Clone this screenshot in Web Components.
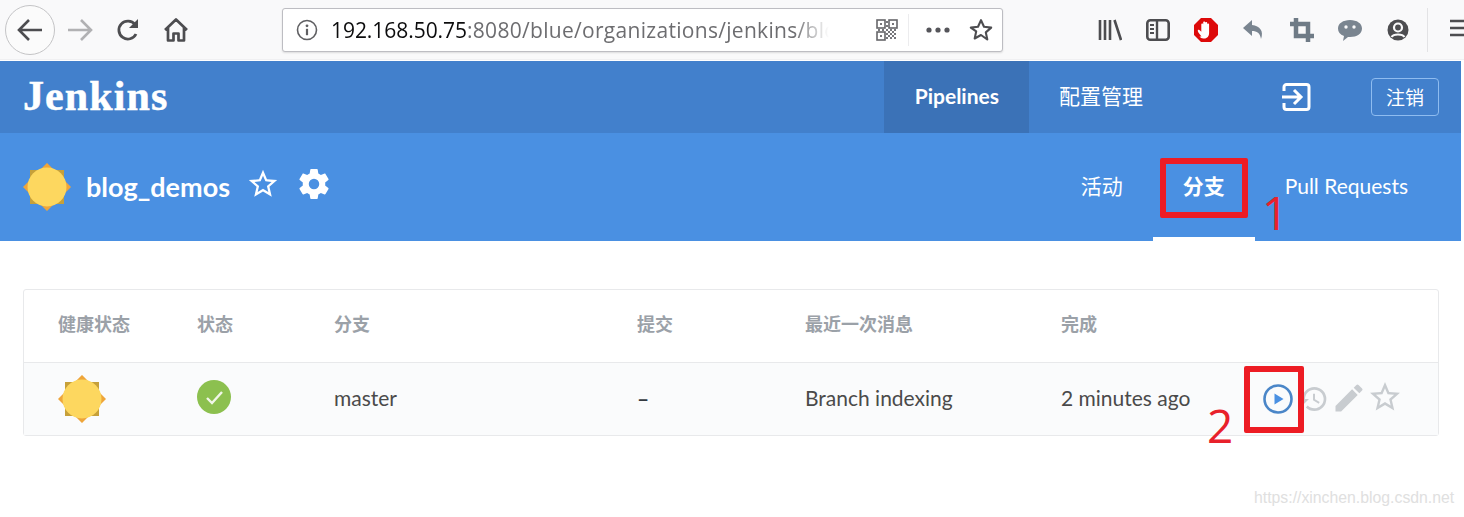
<!DOCTYPE html>
<html>
<head>
<meta charset="utf-8">
<title>Jenkins</title>
<style>
  html, body { margin: 0; padding: 0; background: #fff; overflow: hidden; }
  body { width: 1464px; height: 517px; position: relative; font-family: Lato, "Noto Sans CJK SC", sans-serif; }
  #wm { position: absolute; left: 1254px; top: 489px; font: 15.8px "Liberation Sans", sans-serif; color: #e0e0e0; }
</style>
</head>
<body>
<browser-toolbar></browser-toolbar>
<jenkins-header></jenkins-header>
<pipeline-bar name="blog_demos"></pipeline-bar>
<branch-table>
  <branch-row branch="master" commit="–" message="Branch indexing" done="2 minutes ago"></branch-row>
</branch-table>
<red-mark x="1160" y="158" w="88" h="60" label="1" lx="1262" ly="182"></red-mark>
<red-mark x="1244" y="366" w="60" h="67" label="2" lx="1207" ly="395"></red-mark>
<span id="wm">https://xinchen.blog.csdn.net</span>

<script>
const ICONS = {
  history: 'M13 3a9 9 0 0 0-9 9H1l3.89 3.89.07.14L9 12H6c0-3.87 3.13-7 7-7s7 3.13 7 7-3.13 7-7 7c-1.93 0-3.68-.79-4.94-2.06l-1.42 1.42A8.954 8.954 0 0 0 13 21a9 9 0 0 0 0-18zm-1 5v5l4.28 2.54.72-1.21-3.5-2.08V8H12z',
  pencil: 'M3 17.25V21h3.75L17.81 9.94l-3.75-3.75L3 17.25zM20.71 7.04a1 1 0 0 0 0-1.41l-2.34-2.34a1 1 0 0 0-1.41 0l-1.83 1.83 3.75 3.75 1.83-1.83z',
  star: 'M22 9.24l-7.19-.62L12 2 9.19 8.63 2 9.24l5.46 4.73L5.82 21 12 17.27 18.18 21l-1.63-7.03L22 9.24zM12 15.4l-3.76 2.27 1-4.28-3.32-2.88 4.38-.38L12 6.1l1.71 4.04 4.38.38-3.32 2.88 1 4.28L12 15.4z',
  gear: 'M19.43 12.98c.04-.32.07-.64.07-.98s-.03-.66-.07-.98l2.11-1.65c.19-.15.24-.42.12-.64l-2-3.46c-.12-.22-.39-.3-.61-.22l-2.49 1c-.52-.4-1.08-.73-1.69-.98l-.38-2.65A.488.488 0 0 0 14 2h-4c-.25 0-.46.18-.49.42l-.38 2.65c-.61.25-1.17.59-1.69.98l-2.49-1c-.23-.09-.49 0-.61.22l-2 3.46c-.13.22-.07.49.12.64l2.11 1.65c-.04.32-.07.65-.07.98s.03.66.07.98l-2.11 1.65c-.19.15-.24.42-.12.64l2 3.46c.12.22.39.3.61.22l2.49-1c.52.4 1.08.73 1.69.98l.38 2.65c.03.24.24.42.49.42h4c.25 0 .46-.18.49-.42l.38-2.65c.61-.25 1.17-.59 1.69-.98l2.49 1c.23.09.49 0 .61-.22l2-3.46c.12-.22.07-.49-.12-.64l-2.11-1.65zM12 15.5a3.5 3.5 0 1 1 0-7 3.5 3.5 0 0 1 0 7z'
};

class MdIcon extends HTMLElement {
  connectedCallback() {
    const size = this.getAttribute('size') || 24;
    const color = this.getAttribute('color') || '#fff';
    this.attachShadow({ mode: 'open' }).innerHTML = `
      <style>:host{display:block;width:${size}px;height:${size}px;line-height:0}</style>
      <svg width="${size}" height="${size}" viewBox="0 0 24 24"><path fill="${color}" fill-rule="evenodd" d="${ICONS[this.getAttribute('name')]}"/></svg>`;
  }
}
customElements.define('md-icon', MdIcon);

class WeatherSun extends HTMLElement {
  connectedCallback() {
    const size = this.getAttribute('size') || 46;
    this.attachShadow({ mode: 'open' }).innerHTML = `
      <style>:host{display:block;width:${size}px;height:${size}px;line-height:0}</style>
      <svg width="${size}" height="${size}" viewBox="0 0 48 48">
        <rect x="7" y="7" width="34" height="34" fill="#c6a03a"/>
        <rect x="7" y="7" width="34" height="34" fill="#eea53a" transform="rotate(45 24 24)"/>
        <circle cx="24" cy="24" r="19.5" fill="#fdd75f"/>
      </svg>`;
  }
}
customElements.define('weather-sun', WeatherSun);

const toolbarTpl = document.createElement('template');
toolbarTpl.innerHTML = `
  <style>
    :host { display: flex; align-items: center; height: 60px; background: #f9f9fa; box-sizing: border-box; padding-left: 5px; border-bottom: 1px solid #f0f0f2; overflow: hidden; }
    .back { width: 50px; height: 50px; border-radius: 50%; border: 1px solid #c4c4c6; background: #fbfbfb; box-sizing: border-box; display: flex; align-items: center; justify-content: center; flex: none; }
    .btn { width: 48px; height: 40px; display: flex; align-items: center; justify-content: center; flex: none; }
    .nav { display: flex; flex: none; }
    .fwd { margin-left: 1px; }
    .url { margin-left: 82px; width: 721px; height: 44px; box-sizing: border-box; background: #fff; border: 1px solid #bdbdc2; border-radius: 3px; box-shadow: 0 1px 2px rgba(0,0,0,.12); display: flex; align-items: center; padding-left: 13px; flex: none; }
    .text { margin-left: 13px; width: 498px; white-space: nowrap; font: 21px "Open Sans", sans-serif; color: #6d6d70; letter-spacing: .3px; -webkit-mask-image: linear-gradient(90deg,#000 93%,transparent); mask-image: linear-gradient(90deg,#000 93%,transparent); }
    .text b { font-weight: 400; color: #0c0c0d; letter-spacing: -.05px; }
    .qr { margin-left: 47px; }
    .sep { width: 1px; height: 32px; background: #ececee; margin-left: 10px; }
    .dots { margin-left: 17px; }
    .staru { margin-left: 19px; }
    .right { display: flex; margin-left: 83px; flex: none; }
    .vsep { width: 1px; height: 44px; background: #e3e3e5; margin-left: 5px; flex: none; }
    .ham { margin-left: 22px; flex: none; }
  </style>
  <div class="back">
    <svg width="30" height="30" viewBox="0 0 30 30"><path d="M27 15H4M14 5L4 15l10 10" fill="none" stroke="#4d4d50" stroke-width="2.6"/></svg>
  </div>
  <div class="nav">
    <div class="btn fwd"><svg width="28" height="26" viewBox="0 0 28 26"><path d="M2 13h23M15 3l10 10-10 10" fill="none" stroke="#b1b1b3" stroke-width="2.6"/></svg></div>
    <div class="btn"><svg width="26" height="26" viewBox="0 0 26 26"><path d="M21 17a9 9 0 1 1-1-9.5" fill="none" stroke="#4d4d50" stroke-width="2.8"/><path d="M23 2v9h-9z" fill="#4d4d50"/></svg></div>
    <div class="btn"><svg width="26" height="26" viewBox="0 0 26 26"><path d="M2 13L13 2.5 24 13M5 11v12.5h5.5v-7h5v7H21V11" fill="none" stroke="#4d4d50" stroke-width="2.7" stroke-linejoin="round"/></svg></div>
  </div>
  <div class="url">
    <svg width="22" height="22" viewBox="0 0 22 22"><circle cx="11" cy="11" r="9.5" fill="none" stroke="#5f5f62" stroke-width="1.6"/><circle cx="11" cy="6.8" r="1.4" fill="#5f5f62"/><path d="M11 9.8v6.4" stroke="#5f5f62" stroke-width="2.2"/></svg>
    <div class="text"><b>192.168.50.75</b>:8080/blue/organizations/jenkins/blo</div>
    <svg class="qr" width="22" height="22" viewBox="0 0 22 22">
      <g fill="none" stroke="#66666a" stroke-width="1.6"><rect x="1" y="1" width="8" height="8"/><rect x="13" y="1" width="8" height="8"/><rect x="1" y="13" width="8" height="8"/></g>
      <path d="M4 4h2v2H4zM16 4h2v2h-2zM4 16h2v2H4zM10 2h2v2h-2zM10 6h2v2h-2zM10 10h2v2h-2zM2 10h2v2H2zM6 10h2v2H6zM14 10h2v2h-2zM18 10h2v2h-2zM12 12h2v2h-2zM16 12h2v2h-2zM10 14h2v2h-2zM14 14h2v2h-2zM18 14h2v2h-2zM12 16h2v2h-2zM16 16h2v2h-2zM10 18h2v2h-2zM14 18h2v2h-2zM18 18h2v2h-2z" fill="#77777b"/>
    </svg>
    <div class="sep"></div>
    <svg class="dots" width="24" height="6" viewBox="0 0 24 6"><circle cx="3" cy="3" r="2.6" fill="#55555a"/><circle cx="12" cy="3" r="2.6" fill="#55555a"/><circle cx="21" cy="3" r="2.6" fill="#55555a"/></svg>
    <svg class="staru" width="24" height="24" viewBox="0 0 24 24"><path d="M12 2.2l3 6.6 7.2.8-5.4 4.8 1.5 7.1L12 17l-6.300 3.500 1.500-7.100L1.800 9.600 9 8.800z" fill="none" stroke="#4d4d50" stroke-width="2.100" stroke-linejoin="round"/></svg>
  </div>
  <div class="right">
    <div class="btn"><svg width="24" height="24" viewBox="0 0 24 24"><path d="M2 2v20M7 2v20M12 2v20M16.500 2L23 22" stroke="#4d4d50" stroke-width="2.600" fill="none"/></svg></div>
    <div class="btn"><svg width="24" height="22" viewBox="0 0 24 22"><rect x="1.300" y="1.300" width="21.400" height="19.400" rx="3" fill="none" stroke="#4d4d50" stroke-width="2.600"/><path d="M11 1v20" stroke="#4d4d50" stroke-width="2.400"/><path d="M4 6h4M4 10h4M4 14h4" stroke="#4d4d50" stroke-width="1.800"/></svg></div>
    <div class="btn"><svg width="26" height="26" viewBox="0 0 26 26"><path d="M8 1h10l7 7v10l-7 7H8l-7-7V8z" fill="#dd0a0a"/><path d="M8.500 19.500C7 17.500 5 15.500 4.800 14c-.2-1.300 1.200-1.500 2.200-.6l1.300 1.300V7.500c0-1.400 1.900-1.400 1.900 0v3.500V5.500c0-1.400 2-1.400 2 0V11V6c0-1.400 2-1.400 2 0v5V7.500c0-1.400 1.900-1.400 1.900 0V16c0 3-1.800 5.500-4.800 5.500h-1c-1.700 0-2.800-.7-3.800-2z" fill="#fff"/></svg></div>
    <div class="btn"><svg width="24" height="24" viewBox="0 0 24 24"><path d="M10 2L1 10l9 8v-5c5 0 8 2 9 8 3-8-1-13-9-14z" fill="#7a8590"/></svg></div>
    <div class="btn"><svg width="24" height="24" viewBox="0 0 24 24"><path d="M6 0v18h18M0 6h18v18" fill="none" stroke="#6f7b86" stroke-width="4.500"/></svg></div>
    <div class="btn"><svg width="26" height="24" viewBox="0 0 26 24"><path d="M13 2c7 0 12 3.500 12 8.500S20 19 13 19h-2l-5 4 1-5C3 16.500 1 14 1 10.500 1 5.500 6 2 13 2z" fill="#7a8590"/><circle cx="9" cy="9" r="1.700" fill="#f9f9fa"/><circle cx="17" cy="9" r="1.700" fill="#f9f9fa"/></svg></div>
    <div class="btn"><svg width="24" height="24" viewBox="0 0 24 24"><circle cx="12" cy="12" r="10.500" fill="#4d4d50"/><circle cx="12" cy="9.500" r="4" fill="none" stroke="#f9f9fa" stroke-width="2.200"/><path d="M5.500 19c2-3.500 11-3.500 13 0" fill="none" stroke="#f9f9fa" stroke-width="2"/></svg></div>
  </div>
  <div class="vsep"></div>
  <div class="ham"><svg width="16" height="20" viewBox="0 0 16 20"><path d="M0 3h16M0 10h16M0 17h16" stroke="#4d4d50" stroke-width="2.600"/></svg></div>
`;
class BrowserToolbar extends HTMLElement {
  constructor() {
    super();
    this.attachShadow({ mode: 'open' }).appendChild(toolbarTpl.content.cloneNode(true));
  }
}
customElements.define('browser-toolbar', BrowserToolbar);

const headerTpl = document.createElement('template');
headerTpl.innerHTML = `
  <style>
    :host { display: flex; align-items: stretch; width: 1461px; height: 72px; margin-top: 1px; background: #4280cc; color: #fff; font-family: Lato, "Noto Sans CJK SC", sans-serif; }
    .logo { font: 700 42px "Liberation Serif", serif; letter-spacing: 1.1px; -webkit-text-stroke: .5px #fff; padding-left: 23px; align-self: center; margin-top: -2px; }
    nav { margin-left: auto; display: flex; font-size: 21px; }
    nav a { display: flex; align-items: center; padding: 0 30px 4px; height: 72px; box-sizing: border-box; }
    nav a.on { background: #3b72b7; font-weight: 700; padding-left: 31px; }
    .exit { margin-left: 108px; align-self: center; width: 30px; height: 30px; }
    .logout { margin: 0 22px 0 60px; align-self: center; width: 68px; height: 38px; box-sizing: border-box; border: 1px solid #8ebcf0; border-radius: 4px; display: flex; align-items: center; justify-content: center; font-size: 19px; padding-bottom: 2px; }
  </style>
  <div class="logo">Jenkins</div>
  <nav><a class="on">Pipelines</a><a>配置管理</a></nav>
  <svg class="exit" viewBox="0 0 30 30"><path d="M3 9V5a2.500 2.500 0 0 1 2.500-2.500h20A2.500 2.500 0 0 1 28 5v20a2.500 2.500 0 0 1-2.500 2.500h-20A2.500 2.500 0 0 1 3 25v-4" fill="none" stroke="#fff" stroke-width="3"/><path d="M1 15h19M13 8l7 7-7 7" fill="none" stroke="#fff" stroke-width="3"/></svg>
  <div class="logout">注销</div>
`;
class JenkinsHeader extends HTMLElement {
  constructor() {
    super();
    this.attachShadow({ mode: 'open' }).appendChild(headerTpl.content.cloneNode(true));
  }
}
customElements.define('jenkins-header', JenkinsHeader);

const barTpl = document.createElement('template');
barTpl.innerHTML = `
  <style>
    :host { display: flex; align-items: center; width: 1461px; height: 108px; background: #4a90e2; color: #fff; box-sizing: border-box; padding-left: 23px; font-family: Lato, "Noto Sans CJK SC", sans-serif; }
    .name { font-size: 27px; font-weight: 700; margin-left: 15px; margin-top: -2px; }
    .star { margin-left: 16px; margin-top: -6px; }
    .gear { margin-left: 16px; margin-top: -6px; }
    .tabs { margin-left: auto; display: flex; align-self: stretch; font-size: 21px; padding-right: 23px; }
    .tab { display: flex; align-items: center; height: 108px; box-sizing: border-box; padding: 0 30px 4px; }
    .tab.on { font-weight: 700; border-bottom: 4px solid #fff; padding-bottom: 0; }
  </style>
  <weather-sun size="48"></weather-sun>
  <div class="name"></div>
  <md-icon class="star" name="star" size="34"></md-icon>
  <md-icon class="gear" name="gear" size="36"></md-icon>
  <div class="tabs">
    <div class="tab">活动</div>
    <div class="tab on">分支</div>
    <div class="tab">Pull Requests</div>
  </div>
`;
class PipelineBar extends HTMLElement {
  constructor() {
    super();
    this.attachShadow({ mode: 'open' }).appendChild(barTpl.content.cloneNode(true));
  }
  connectedCallback() {
    this.shadowRoot.querySelector('.name').textContent = this.getAttribute('name');
  }
}
customElements.define('pipeline-bar', PipelineBar);

const COLS = '139px 137px 303px 168px 256px 1fr';

const tableTpl = document.createElement('template');
tableTpl.innerHTML = `
  <style>
    :host { display: block; width: 1416px; margin: 48px 0 0 23px; box-sizing: border-box; border: 1px solid #e8e9eb; border-radius: 3px; font-family: Lato, "Noto Sans CJK SC", sans-serif; }
    .head { display: grid; grid-template-columns: ${COLS}; align-items: center; height: 72px; box-sizing: content-box; padding: 0 0 0 34px; font-size: 18px; font-weight: 700; color: #9ba1a8; border-bottom: 1px solid #e8e9eb; }
    .head div { margin-top: -7px; }
  </style>
  <div class="head"><div>健康状态</div><div>状态</div><div>分支</div><div>提交</div><div>最近一次消息</div><div>完成</div></div>
  <slot></slot>
`;
class BranchTable extends HTMLElement {
  constructor() {
    super();
    this.attachShadow({ mode: 'open' }).appendChild(tableTpl.content.cloneNode(true));
  }
}
customElements.define('branch-table', BranchTable);

const rowTpl = document.createElement('template');
rowTpl.innerHTML = `
  <style>
    :host { display: grid; grid-template-columns: ${COLS}; align-items: center; height: 72px; padding-left: 34px; background: #fafbfc; font-size: 21px; color: #4a4a4a; }
    .ok { width: 34px; height: 34px; margin-top: -5px; }
    .branch, .commit, .message, .done { margin-top: -4px; }
    .commit { font-weight: 700; color: #33393f; }
    .done { display: flex; align-items: center; white-space: nowrap; }
    .acts { display: flex; align-items: center; margin-left: 73px; margin-top: 4px; }
    .acts .hist { margin-left: 4px; }
    .acts .pen { margin-left: 2px; margin-top: -2px; }
    .acts .st { margin-left: 0; margin-top: -4px; }
  </style>
  <weather-sun class="sun" size="48"></weather-sun>
  <svg class="ok" viewBox="0 0 34 34"><circle cx="17" cy="17" r="17" fill="#8cc04f"/><path d="M10 18l5 5 10-11" fill="none" stroke="#f1f6e8" stroke-width="2.400"/></svg>
  <div class="branch"></div>
  <div class="commit"></div>
  <div class="message"></div>
  <div class="done"><span class="when"></span>
    <div class="acts">
      <svg width="30" height="30" viewBox="0 0 30 30"><circle cx="15" cy="15" r="13.500" fill="none" stroke="#4a86c8" stroke-width="2.600"/><path d="M11.500 9.500L20.500 15l-9 5.500z" fill="#4a90e2"/></svg>
      <md-icon class="hist" name="history" size="32" color="#c8ccd0"></md-icon>
      <md-icon class="pen" name="pencil" size="36" color="#c8ccd0"></md-icon>
      <md-icon class="st" name="star" size="36" color="#c8ccd0"></md-icon>
    </div>
  </div>
`;
class BranchRow extends HTMLElement {
  constructor() {
    super();
    this.attachShadow({ mode: 'open' }).appendChild(rowTpl.content.cloneNode(true));
  }
  connectedCallback() {
    const root = this.shadowRoot;
    root.querySelector('.branch').textContent = this.getAttribute('branch');
    root.querySelector('.commit').textContent = this.getAttribute('commit');
    root.querySelector('.message').textContent = this.getAttribute('message');
    root.querySelector('.when').textContent = this.getAttribute('done');
  }
}
customElements.define('branch-row', BranchRow);

// hand drawn annotations that lie over the screenshot
class RedMark extends HTMLElement {
  connectedCallback() {
    const a = n => this.getAttribute(n);
    this.attachShadow({ mode: 'open' }).innerHTML = `
      <style>
        :host { display: contents; }
        .box { position: absolute; left: ${a('x')}px; top: ${a('y')}px; width: ${a('w')}px; height: ${a('h')}px; box-sizing: border-box; border: 6px solid #ed1c24; border-radius: 2px; }
        .num { position: absolute; left: ${a('lx')}px; top: ${a('ly')}px; font: 46px/60px "Open Sans", sans-serif; color: #e8212b; }
      </style>
      <div class="box"></div>
      <div class="num">${a('label')}</div>`;
  }
}
customElements.define('red-mark', RedMark);
</script>
</body>
</html>
